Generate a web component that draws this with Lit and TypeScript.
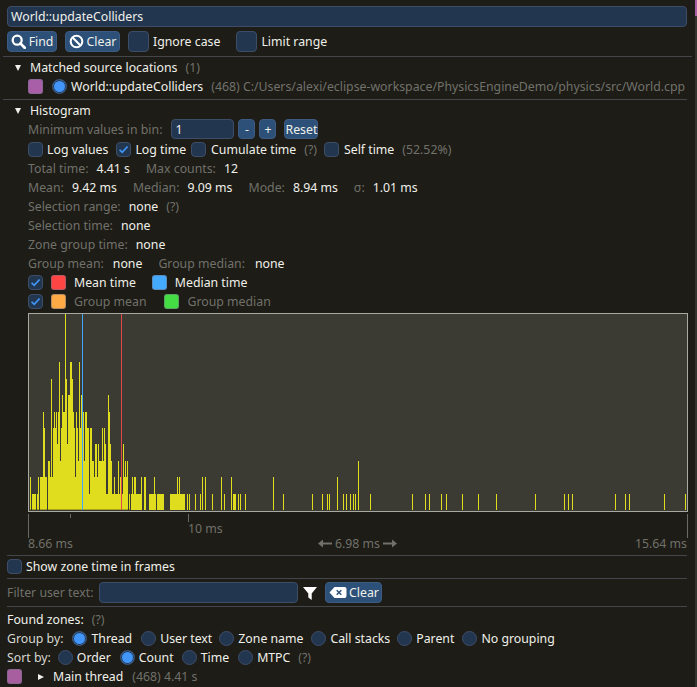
import { LitElement, html, css, svg } from "lit";
import { customElement } from "lit/decorators.js";

// bar heights (in counts, hex) for every pixel column starting at x=30
const DENSE =
  "2011110120222652203" +
  "3282565646935766c" +
  "84779986526539575636" +
  "65515533244243335354" +
  "11764311211131211423230";
const SPARSE: [number, number][] = [
  [129, 1], [131, 1], [132, 2], [133, 1], [134, 2], [135, 2], [136, 1], [137, 1], [138, 1], [139, 1], [140, 1], [141, 2],
  [144, 2], [145, 2], [149, 1], [150, 1], [151, 1], [152, 1], [153, 1], [154, 2], [155, 1],
  [157, 1], [158, 1], [159, 1], [160, 1], [161, 1], [162, 1], [163, 1],
  [170, 1], [171, 1], [172, 1], [173, 1], [174, 1], [175, 1], [176, 1], [177, 2], [178, 1], [179, 2], [180, 1],
  [181, 1], [182, 1], [183, 1], [184, 1], [187, 1], [189, 1], [195, 1], [200, 1], [202, 2], [205, 2], [212, 1],
  [221, 2], [224, 1], [231, 2], [233, 1], [234, 1], [235, 1], [238, 1], [240, 1], [245, 1], [273, 2], [283, 1],
  [312, 1], [322, 1], [327, 1], [329, 1], [337, 2], [343, 1], [346, 1], [350, 1], [353, 1], [355, 1], [358, 3],
  [370, 1], [412, 1], [425, 1], [429, 1], [441, 1], [446, 1], [462, 1], [478, 1], [496, 1], [535, 1], [564, 1],
  [568, 1], [572, 1], [615, 1], [625, 1], [629, 1], [664, 1], [685, 1],
];

const searchIcon = html`<svg class="ico" viewBox="0 0 16 16"><circle cx="6.6" cy="6.6" r="4.8" fill="none" stroke="#fff" stroke-width="2.4"/><path d="M10 10l4.6 4.6" stroke="#fff" stroke-width="3" stroke-linecap="round"/></svg>`;
const banIcon = html`<svg class="ico" viewBox="0 0 16 16"><circle cx="8" cy="8" r="6.2" fill="none" stroke="#fff" stroke-width="2.2"/><path d="M3.8 3.8l8.4 8.4" stroke="#fff" stroke-width="2.2"/></svg>`;
const eraseIcon = html`<svg class="ico-wide" viewBox="0 0 18 13"><path fill="#fff" fill-rule="evenodd" d="M5.5 1H15.500a2 2 0 0 1 2 2v7a2 2 0 0 1-2 2H5.500L.5 6.500zM8.200 3.700l-1 1 1.800 1.800-1.800 1.800 1 1 1.800-1.800 1.800 1.800 1-1-1.800-1.800 1.800-1.800-1-1-1.800 1.800z"/></svg>`;
const funnelIcon = html`<svg class="funnel" viewBox="0 0 14 14"><path fill="#fff" d="M0 1h14L8.700 7.500V14L5.300 11.500V7.500z"/></svg>`;
const checkMark = html`<svg viewBox="0 0 15 15" class="mark"><path d="M3 7.800l3 3L12.200 4" fill="none" stroke="#4296fa" stroke-width="2"/></svg>`;
const arrowLeft = html`<svg class="arrow" viewBox="0 0 14 9"><path fill="#71716b" d="M0 4.500L5 .5v3h9v2H5v3z"/></svg>`;
const arrowRight = html`<svg class="arrow" viewBox="0 0 14 9"><path fill="#71716b" d="M14 4.500L9 .5v3H0v2h9v3z"/></svg>`;

@customElement("app-root")
export class AppRoot extends LitElement {
  static styles = css`
    :host {
      display: block;
      width: 697px;
      height: 687px;
      overflow: hidden;
      background: #1d1c16;
      color: #f0f0ea;
      font-family: "Noto Sans", sans-serif;
      font-size: 12.3px;
      line-height: 19px;
    }
    .page {
      position: relative;
      box-sizing: border-box;
      height: 687px;
      display: flex;
      flex-direction: column;
      padding: 6px 8px 0 7px;
      border-right: 2px solid #33332f;
    }
    /* neighbouring window showing at the top right corner */
    .page::after {
      content: "";
      position: absolute;
      top: 0;
      right: -2px;
      width: 2px;
      height: 16px;
      background: #a85fa8;
    }
    .row {
      display: flex;
      align-items: center;
      height: 19px;
      white-space: nowrap;
      flex: none;
    }
    .in {
      margin-left: 21px;
    }
    .dim {
      color: #71716b;
    }
    .soft {
      color: #d8d8d2;
    }
    .field {
      background: #223650;
      border: 1px solid #3d4d68;
      border-radius: 4px;
      box-sizing: border-box;
      height: 21px;
      padding-left: 3px;
      line-height: 19px;
      flex: none;
    }
    .search {
      width: 680px;
    }
    .btn {
      display: inline-flex;
      align-items: center;
      justify-content: center;
      gap: 3px;
      box-sizing: border-box;
      height: 21px;
      background: #2c5078;
      border: 1px solid #3d5a80;
      border-radius: 4px;
      flex: none;
    }
    .tools {
      height: 21px;
      margin-top: 4px;
    }
    .ico {
      width: 15px;
      height: 15px;
    }
    .ico-wide {
      width: 18px;
      height: 13px;
    }
    .funnel {
      width: 14px;
      height: 14px;
      flex: none;
      display: block;
    }
    .arrow {
      width: 14px;
      height: 9px;
      flex: none;
    }
    .check,
    .radio,
    .swatch {
      display: inline-block;
      box-sizing: border-box;
      width: 15px;
      height: 15px;
      flex: none;
    }
    .check {
      background: #223650;
      border: 1px solid #3d4d68;
      border-radius: 4px;
      margin-right: 4px;
    }
    .check.big {
      width: 21px;
      height: 21px;
    }
    .check.wide {
      margin-right: 5px;
    }
    .mark {
      display: block;
      width: 13px;
      height: 13px;
    }
    .radio {
      background: #223650;
      border: 1px solid #3d4d68;
      border-radius: 50%;
      margin-right: 4px;
    }
    .radio.on {
      background: #4296fa;
      box-shadow: inset 0 0 0 1px #223650;
    }
    .swatch {
      border-radius: 3px;
      border: 1px solid rgba(110, 110, 128, 0.5);
    }
    .sep {
      height: 1px;
      background: #45454c;
      flex: none;
    }
    .sep.top {
      margin: 4px -5px 1px -4px;
    }
    .sep.mid {
      margin: 3px 0 1px -4px;
    }
    .tri {
      width: 0;
      height: 0;
      flex: none;
      margin: 0 9px 0 8px;
      border-left: 3.500px solid transparent;
      border-right: 3.500px solid transparent;
      border-top: 6px solid #f0f0ea;
    }
    .tri.closed {
      margin: 0 9px 0 16px;
      border-top: 3.500px solid transparent;
      border-bottom: 3.500px solid transparent;
      border-left: 6px solid #f0f0ea;
      border-right: 0;
    }
    .gap4 { margin-left: 4px; }
    .gap5 { margin-left: 5px; }
    .gap7 { margin-left: 7px; }
    .gap8 { margin-left: 8px; }
    .gap9 { margin-left: 9px; }
    .gap10 { margin-left: 10px; }
    .gap16 { margin-left: 16px; }
    .gap17 { margin-left: 17px; }
    .minrow .field {
      width: 63px;
      height: 20px;
      margin-left: 9px;
      margin-top: -1px;
    }
    .minrow .btn {
      height: 20px;
      margin-top: -1px;
    }
    .step {
      width: 17px;
    }
    .reset {
      width: 34px;
    }
    .after-min {
      margin-top: 1px;
    }
    .plot {
      display: block;
      width: 660px;
      height: 199px;
      margin: 2px 0 0 21px;
      flex: none;
    }
    .axis {
      position: relative;
      height: 43px;
      margin-left: 21px;
      width: 660px;
      flex: none;
    }
    .tick {
      position: absolute;
      width: 1px;
      top: 2px;
      background: #6a6a64;
    }
    .axis span {
      position: absolute;
      display: flex;
      align-items: center;
      gap: 3px;
      line-height: 15px;
      color: #71716b;
      white-space: nowrap;
    }
    .filter {
      height: 21px;
      margin-top: 3px;
    }
    .filter .field {
      width: 199px;
      margin-left: 6px;
    }
    .filter .btn {
      width: 57px;
      margin-left: 8px;
      gap: 2px;
    }
  `;

  private plot() {
    const bars: [number, number][] = [...SPARSE];
    for (let i = 0; i < DENSE.length && 30 + i < 129; i++) {
      bars.push([30 + i, parseInt(DENSE[i], 16)]);
    }
    return html`<svg class="plot" viewBox="28 314 660 199" shape-rendering="crispEdges">
      <rect x="28.500" y="314.500" width="659" height="198" fill="#3c3b33" stroke="#a9a9a3"/>
      ${bars.map(([x, h]) =>
        h ? svg`<rect x=${x} y=${Math.max(315, 511 - h * 16.4)} width="1" height=${Math.min(196, h * 16.4)} fill="#e0dc1e"/>` : ""
      )}
      <rect x="30" y="510" width="100" height="1" fill="#1d1c16" opacity="0.3"/>
      <rect x="82" y="315" width="1" height="196" fill="#42a5ff"/>
      <rect x="121" y="315" width="1" height="196" fill="#e04848"/>
    </svg>`;
  }

  private check(on = false, cls = "") {
    return html`<span class="check ${cls}">${on ? checkMark : ""}</span>`;
  }

  private radio(label: string, on = false, cls = "gap8") {
    return html`<span class="radio ${on ? "on" : ""} ${cls}"></span><span>${label}</span>`;
  }

  render() {
    return html`<div class="page">
      <div class="field search">World::updateColliders</div>
      <div class="row tools">
        <span class="btn" style="width:50px">${searchIcon}Find</span>
        <span class="btn gap8" style="width:55px">${banIcon}Clear</span>
        <span class="gap8 check big"></span><span>Ignore case</span>
        <span class="check big gap16"></span><span>Limit range</span>
      </div>
      <div class="sep top"></div>

      <div class="row"><i class="tri"></i><span>Matched source locations</span><span class="dim gap8">(1)</span></div>
      <div class="row in">
        <span class="swatch" style="background:#a85fa8"></span>
        <span class="radio on gap9"></span><span>World::updateColliders</span>
        <span class="dim gap8">(468) C:/Users/alexi/eclipse-workspace/PhysicsEngineDemo/physics/src/World.cpp</span>
      </div>
      <div class="sep mid"></div>

      <div class="row"><i class="tri"></i><span>Histogram</span></div>
      <div class="row in minrow">
        <span class="dim">Minimum values in bin:</span>
        <span class="field">1</span>
        <span class="btn step gap4">-</span>
        <span class="btn step gap4">+</span>
        <span class="btn reset gap8">Reset</span>
      </div>
      <div class="row in after-min">
        ${this.check()}<span>Log values</span>
        ${this.check(true, "gap8")}<span>Log time</span>
        ${this.check(false, "gap5 wide")}<span>Cumulate time</span><span class="dim gap8">(?)</span>
        ${this.check(false, "gap7 wide")}<span>Self time</span><span class="dim gap8">(52.52%)</span>
      </div>
      <div class="row in"><span class="dim">Total time:</span><span class="gap8">4.41 s</span><span class="dim gap16">Max counts:</span><span class="gap8">12</span></div>
      <div class="row in"><span class="dim">Mean:</span><span class="gap8">9.42 ms</span><span class="dim gap16">Median:</span><span class="gap8">9.09 ms</span><span class="dim gap16">Mode:</span><span class="gap8">8.94 ms</span><span class="dim gap16">σ:</span><span class="gap8">1.01 ms</span></div>
      <div class="row in"><span class="dim">Selection range:</span><span class="gap8">none</span><span class="dim gap8">(?)</span></div>
      <div class="row in"><span class="dim">Selection time:</span><span class="gap8">none</span></div>
      <div class="row in"><span class="dim">Zone group time:</span><span class="gap8">none</span></div>
      <div class="row in"><span class="dim">Group mean:</span><span class="gap9">none</span><span class="dim gap16">Group median:</span><span class="gap10">none</span></div>
      <div class="row in">
        ${this.check(true)}<span class="swatch" style="margin-left:4px;background:#ff4444"></span><span class="gap8">Mean time</span>
        <span class="swatch gap16" style="background:#44aaff"></span><span class="gap8">Median time</span>
      </div>
      <div class="row in">
        ${this.check(true)}<span class="swatch" style="margin-left:4px;background:#ffaa44"></span><span class="gap8 dim">Group mean</span>
        <span class="swatch gap17" style="background:#44dd44"></span><span class="gap9 dim">Group median</span>
      </div>

      ${this.plot()}
      <div class="axis">
        <i class="tick" style="left:0;height:24px"></i>
        <i class="tick" style="left:42px;height:4px"></i>
        <i class="tick" style="left:160px;height:8px"></i>
        <i class="tick" style="left:659px;height:24px"></i>
        <span style="left:160px;top:9px">10 ms</span>
        <span style="left:0;top:24px">8.66 ms</span>
        <span style="left:290px;top:24px">${arrowLeft}6.98 ms${arrowRight}</span>
        <span style="right:1px;top:24px">15.64 ms</span>
      </div>

      <div class="sep"></div>
      <div class="row" style="margin-top:1px">${this.check()}<span>Show zone time in frames</span></div>
      <div class="sep" style="margin-top:2px"></div>
      <div class="row filter">
        <span class="dim">Filter user text:</span>
        <span class="field"></span>
        <span class="gap5" style="display:flex">${funnelIcon}</span>
        <span class="btn">${eraseIcon}Clear</span>
      </div>
      <div class="sep" style="margin-top:3px"></div>
      <div class="row" style="margin-top:3px">Found zones:<span class="dim gap8">(?)</span></div>
      <div class="row">
        <span class="soft">Group by:</span>
        ${this.radio("Thread", true, "gap9")}${this.radio("User text", false, "gap9")}${this.radio("Zone name", false, "gap7")}${this.radio("Call stacks")}${this.radio("Parent", false, "gap7")}${this.radio("No grouping")}
      </div>
      <div class="row">
        <span class="soft">Sort by:</span>
        ${this.radio("Order", false, "gap7")}${this.radio("Count", true, "gap9")}${this.radio("Time")}${this.radio("MTPC", false, "gap9")}<span class="dim gap8">(?)</span>
      </div>
      <div class="row">
        <span class="swatch" style="background:#a85fa0"></span>
        <i class="tri closed"></i>
        <span>Main thread</span><span class="dim gap9">(468) 4.41 s</span>
      </div>
    </div>`;
  }
}
